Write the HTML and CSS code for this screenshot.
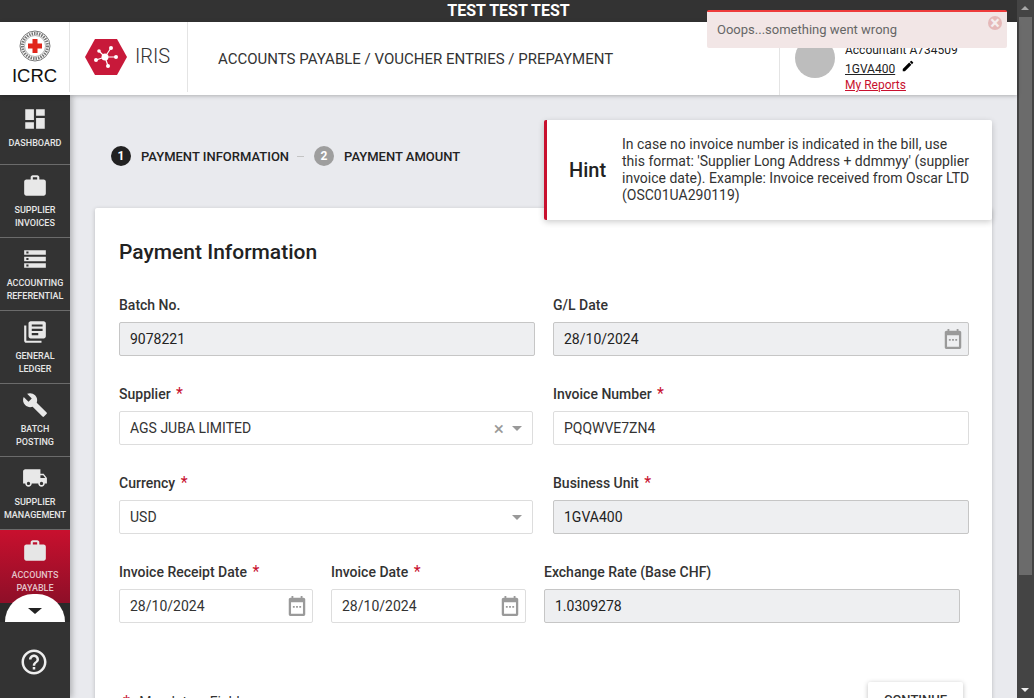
FILE: index.html
```html
<!DOCTYPE html>
<html lang="en">
<head>
    <meta charset="UTF-8">
    <title>IRIS - Prepayment</title>
    <link rel="stylesheet" href="styles.css">
</head>
<body>
    <svg class="defs" width="0" height="0">
        <symbol id="i-case" viewBox="0 0 24 24"><path d="M20 6h-4V4c0-1.110-.89-2-2-2h-4c-1.110 0-2 .89-2 2v2H4c-1.110 0-1.990.89-1.990 2L2 19c0 1.110.89 2 2 2h16c1.110 0 2-.89 2-2V8c0-1.110-.89-2-2-2zm-6 0h-4V4h4v2z"/></symbol>
        <symbol id="i-cal" viewBox="0 0 24 24"><path d="M19 3h-1V1h-2v2H8V1H6v2H5C3.900 3 3 3.900 3 5v16c0 1.100.9 2 2 2h14c1.100 0 2-.9 2-2V5c0-1.100-.9-2-2-2zm-.5 17.500h-13V8h13v12.500zM7.500 12h2v2h-2zm3.500 0h2v2h-2zm3.500 0h2v2h-2z"/></symbol>
    </svg>

    <div class="page">
        <div class="app">
            <div class="topbar">TEST TEST TEST</div>

            <header class="header">
                <div class="logo-icrc">
                    <svg class="emblem" width="32" height="32" viewBox="0 0 32 32">
                        <circle cx="16" cy="16" r="15" fill="#fff" stroke="#777" stroke-width="1"/>
                        <circle cx="16" cy="16" r="12.500" fill="none" stroke="#777" stroke-width="3" stroke-dasharray="1.500 1"/>
                        <circle cx="16" cy="16" r="10.500" fill="#fff" stroke="#888" stroke-width="0.600"/>
                        <path d="M13.500 9h5v4.500H23v5h-4.500V23h-5v-4.500H9v-5h4.500z" fill="#e1251b"/>
                    </svg>
                    <span>ICRC</span>
                </div>
                <div class="logo-iris">
                    <svg width="42" height="36" viewBox="0 0 42 36">
                        <path d="M0 18L10 0h22l10 18-10 18H10z" fill="#c8193a"/>
                        <g stroke="#fff" stroke-width="1.200">
                            <path d="M20 18l-9 3M20 18h11M20 18l3 9M20 18l-6-6M20 18l6-9"/>
                        </g>
                        <g fill="#fff">
                            <circle cx="20" cy="18" r="3.500"/>
                            <circle cx="11" cy="21" r="2"/>
                            <circle cx="31" cy="18" r="2"/>
                            <circle cx="23" cy="27" r="2"/>
                            <circle cx="14" cy="12" r="1.800"/>
                            <circle cx="26" cy="9" r="2"/>
                        </g>
                    </svg>
                    <span>IRIS</span>
                </div>
                <div class="breadcrumb">ACCOUNTS PAYABLE / VOUCHER ENTRIES / PREPAYMENT</div>
                <div class="user">
                    <div class="avatar"></div>
                    <div class="user-info">
                        <div>Accountant A734509</div>
                        <div class="user-unit">
                            <a href="#">1GVA400</a>
                            <svg width="14" height="14" viewBox="0 0 24 24"><path d="M3 17.250V21h3.750L17.810 9.940l-3.750-3.750L3 17.250zM20.710 7.040a1 1 0 0 0 0-1.410l-2.340-2.340a1 1 0 0 0-1.410 0l-1.830 1.830 3.750 3.750 1.830-1.830z"/></svg>
                        </div>
                        <a class="reports" href="#">My Reports</a>
                    </div>
                </div>
            </header>

            <div class="layout">
                <nav class="sidebar">
                    <a class="nav-item nav-first" href="#">
                        <svg viewBox="0 0 24 24"><path d="M3 13h8V3H3v10zm0 8h8v-6H3v6zm10 0h8V11h-8v10zm0-18v6h8V3h-8z"/></svg>
                        <span>DASHBOARD</span>
                    </a>
                    <a class="nav-item" href="#">
                        <svg><use href="#i-case"/></svg>
                        <span>SUPPLIER<br>INVOICES</span>
                    </a>
                    <a class="nav-item" href="#">
                        <svg viewBox="0 0 24 24"><path d="M2 20h20v-4H2v4zm2-3h2v2H4v-2zM2 4v4h20V4H2zm4 3H4V5h2v2zm-4 7h20v-4H2v4zm2-3h2v2H4v-2z"/></svg>
                        <span>ACCOUNTING<br>REFERENTIAL</span>
                    </a>
                    <a class="nav-item" href="#">
                        <svg viewBox="0 0 24 24"><path d="M4 6H2v14c0 1.100.9 2 2 2h14v-2H4V6zm16-4H8c-1.100 0-2 .9-2 2v12c0 1.100.9 2 2 2h12c1.100 0 2-.9 2-2V4c0-1.100-.9-2-2-2zm-1 9H9V9h10v2zm-4 4H9v-2h6v2zm4-8H9V5h10v2z"/></svg>
                        <span>GENERAL<br>LEDGER</span>
                    </a>
                    <a class="nav-item" href="#">
                        <svg viewBox="0 0 24 24"><path d="M22.700 19l-9.100-9.100c.9-2.300.4-5-1.500-6.900-2-2-5-2.400-7.400-1.300L9 6 6 9 1.600 4.700C.4 7.100.9 10.100 2.900 12.100c1.900 1.900 4.600 2.400 6.900 1.500l9.100 9.100c.4.4 1 .4 1.400 0l2.300-2.300c.5-.4.5-1.100.1-1.400z"/></svg>
                        <span>BATCH<br>POSTING</span>
                    </a>
                    <a class="nav-item" href="#">
                        <svg viewBox="0 0 24 24"><path d="M20 8h-3V4H3c-1.100 0-2 .9-2 2v11h2c0 1.660 1.340 3 3 3s3-1.340 3-3h6c0 1.660 1.340 3 3 3s3-1.340 3-3h2v-5l-3-4zM6 18.500c-.83 0-1.500-.67-1.500-1.500s.67-1.500 1.500-1.500 1.500.67 1.500 1.500-.67 1.500-1.500 1.500zm13.500-9l1.960 2.500H17V9.500h2.500zm-1.500 9c-.83 0-1.500-.67-1.500-1.500s.67-1.500 1.500-1.500 1.500.67 1.500 1.500-.67 1.500-1.500 1.500z"/></svg>
                        <span>SUPPLIER<br>MANAGEMENT</span>
                    </a>
                    <a class="nav-item nav-active" href="#">
                        <svg><use href="#i-case"/></svg>
                        <span>ACCOUNTS<br>PAYABLE</span>
                    </a>
                    <div class="nav-more"><i></i></div>
                    <a class="nav-help" href="#">
                        <svg viewBox="0 0 24 24"><path d="M11 18h2v-2h-2v2zm1-16C6.480 2 2 6.480 2 12s4.480 10 10 10 10-4.480 10-10S17.520 2 12 2zm0 18c-4.410 0-8-3.590-8-8s3.590-8 8-8 8 3.590 8 8-3.590 8-8 8zm0-14c-2.210 0-4 1.790-4 4h2c0-1.100.9-2 2-2s2 .9 2 2c0 2-3 1.750-3 5h2c0-2.250 3-2.500 3-5 0-2.210-1.790-4-4-4z"/></svg>
                    </a>
                </nav>

                <main class="content">
                    <div class="stepper">
                        <span class="step-num">1</span>
                        <span class="step-label">PAYMENT INFORMATION</span>
                        <span class="step-line"></span>
                        <span class="step-num step-todo">2</span>
                        <span class="step-label">PAYMENT AMOUNT</span>
                    </div>

                    <div class="hint">
                        <div class="hint-title">Hint</div>
                        <p>In case no invoice number is indicated in the bill, use this format: 'Supplier Long Address + ddmmyy' (supplier invoice date). Example: Invoice received from Oscar LTD (OSC01UA290119)</p>
                    </div>

                    <section class="card">
                        <h2>Payment Information</h2>

                        <div class="row">
                            <div class="field">
                                <label>Batch No.</label>
                                <div class="input disabled">9078221</div>
                            </div>
                            <div class="field">
                                <label>G/L Date</label>
                                <div class="input disabled">28/10/2024
                                    <svg class="cal"><use href="#i-cal"/></svg>
                                </div>
                            </div>
                        </div>

                        <div class="row">
                            <div class="field select-field">
                                <label>Supplier <b>*</b></label>
                                <div class="input">AGS JUBA LIMITED
                                    <span class="clear">&times;</span>
                                    <i class="caret"></i>
                                </div>
                            </div>
                            <div class="field">
                                <label>Invoice Number <b>*</b></label>
                                <div class="input">PQQWVE7ZN4</div>
                            </div>
                        </div>

                        <div class="row">
                            <div class="field select-field">
                                <label>Currency <b>*</b></label>
                                <div class="input">USD
                                    <i class="caret"></i>
                                </div>
                            </div>
                            <div class="field">
                                <label>Business Unit <b>*</b></label>
                                <div class="input disabled">1GVA400</div>
                            </div>
                        </div>

                        <div class="row row-dates">
                            <div class="field">
                                <label>Invoice Receipt Date <b>*</b></label>
                                <div class="input">28/10/2024
                                    <svg class="cal"><use href="#i-cal"/></svg>
                                </div>
                            </div>
                            <div class="field">
                                <label>Invoice Date <b>*</b></label>
                                <div class="input">28/10/2024
                                    <svg class="cal"><use href="#i-cal"/></svg>
                                </div>
                            </div>
                            <div class="field">
                                <label>Exchange Rate (Base CHF)</label>
                                <div class="input disabled">1.0309278</div>
                            </div>
                        </div>

                        <div class="card-foot">
                            <div class="mandatory"><b>*</b> Mandatory Fields</div>
                            <button>CONTINUE</button>
                        </div>
                    </section>
                </main>
            </div>
        </div>

        <div class="scrollbar">
            <i class="arrow-up"></i>
            <div class="thumb"></div>
            <i class="arrow-down"></i>
        </div>

        <div class="toast">
            Ooops...something went wrong
            <span class="toast-close">&times;</span>
        </div>
    </div>
</body>
</html>
```

FILE: styles.css
```css
* {
    box-sizing: border-box;
}

html, body {
    margin: 0;
    height: 100%;
    overflow: hidden;
}

body {
    font-family: Roboto, "Liberation Sans", sans-serif;
    font-size: 14px;
    color: #333;
    background-color: #e9eaee;
}

a {
    color: inherit;
}

.defs {
    position: absolute;
}

.page {
    display: flex;
    height: 698px;
    position: relative;
}

.app {
    flex: 1;
    min-width: 0;
    display: flex;
    flex-direction: column;
}

.topbar {
    height: 22px;
    flex: none;
    background-color: #333;
    color: #fff;
    font-size: 16px;
    font-weight: 700;
    line-height: 22px;
    text-align: center;
}

/* header */
.header {
    height: 73px;
    flex: none;
    display: flex;
    background-color: #fff;
    box-shadow: 0 1px 4px rgba(0, 0, 0, 0.25);
    position: relative;
    z-index: 2;
}

.logo-icrc {
    width: 70px;
    height: 70px;
    border-right: 1px solid #e4e4e4;
    display: flex;
    flex-direction: column;
    align-items: center;
    padding-top: 8px;
}

.logo-icrc span {
    font-family: "Liberation Sans", sans-serif;
    font-size: 18.500px;
    line-height: 21px;
    color: #111;
    margin-top: 3px;
}

.logo-iris {
    width: 118px;
    height: 70px;
    border-right: 1px solid #e4e4e4;
    display: flex;
    align-items: flex-start;
    gap: 8px;
    padding: 17px 0 0 15px;
}

.logo-iris span {
    font-size: 20px;
    font-weight: 300;
    line-height: 34px;
    color: #333;
}

.breadcrumb {
    flex: 1;
    padding-left: 30px;
    font-size: 15px;
    line-height: 74px;
    color: #333;
}

.user {
    width: 238px;
    border-left: 1px solid #e4e4e4;
    display: flex;
    gap: 10px;
    padding: 16px 0 0 15px;
}

.avatar {
    width: 40px;
    height: 40px;
    border-radius: 50%;
    background-color: #bdbdbd;
}

.user-info {
    font-size: 12px;
    line-height: 16px;
    margin-top: 4px;
    color: #222;
}

.user-unit {
    display: flex;
    align-items: center;
    gap: 6px;
    margin-top: 3px;
}

.user-unit svg {
    margin-top: -6px;
}

.reports {
    color: #c8102e;
    display: block;
}

/* sidebar */
.layout {
    flex: 1;
    display: flex;
    min-height: 0;
}

.sidebar {
    width: 70px;
    flex: none;
    background-color: #333;
    box-shadow: 2px 0 6px rgba(0, 0, 0, 0.25);
    position: relative;
    z-index: 1;
}

.nav-item {
    height: 73px;
    display: flex;
    flex-direction: column;
    align-items: center;
    gap: 5px;
    padding-top: 8px;
    border-bottom: 1px solid #6b6b6b;
    color: #e6e6e6;
    text-decoration: none;
    font-size: 9px;
    font-weight: 500;
    line-height: 13px;
    text-align: center;
}

.nav-item svg {
    width: 26px;
    height: 26px;
    flex: none;
    fill: #e8e8e8;
}

.nav-first {
    height: 70px;
    padding-top: 11px;
}

.nav-active {
    background: linear-gradient(#c8102e, #8e0f28);
    border-bottom: 0;
    color: #e3c2c8;
}

.nav-active svg {
    fill: #e6e6e6;
}

.nav-more {
    height: 19px;
    background-color: #2a2a2a;
}

.nav-more::before {
    content: "";
    position: absolute;
    left: 5px;
    top: 499px;
    width: 60px;
    height: 28px;
    background-color: #fff;
    border-radius: 30px 30px 0 0;
}

.nav-more i {
    position: absolute;
    left: 28px;
    top: 513px;
    border: 7px solid transparent;
    border-top: 6px solid #222;
    border-bottom: 0;
}

.nav-help {
    display: block;
    width: 30px;
    height: 30px;
    margin: 25px 0 0 19px;
}

.nav-help svg {
    width: 30px;
    height: 30px;
    fill: #eee;
}

/* content */
.content {
    flex: 1;
    min-width: 0;
    padding: 0 25px;
    position: relative;
    overflow: hidden;
    background-color: #e9eaee;
}

.stepper {
    height: 113px;
    display: flex;
    align-items: center;
    padding: 9px 0 0 16px;
}

.step-num {
    width: 20px;
    height: 20px;
    border-radius: 50%;
    background-color: #222;
    color: #fff;
    font-size: 12px;
    font-weight: 700;
    line-height: 20px;
    text-align: center;
}

.step-todo {
    background-color: #9e9e9e;
}

.step-label {
    margin-left: 10px;
    font-size: 13px;
    font-weight: 500;
    color: #222;
}

.step-line {
    width: 7px;
    height: 1px;
    background-color: #c4c4c4;
    margin: 0 10px 0 8px;
}

.hint {
    position: absolute;
    left: 474px;
    top: 25px;
    width: 448px;
    height: 100px;
    background-color: #fff;
    border-left: 3px solid #c8102e;
    border-radius: 2px;
    box-shadow: 0 2px 6px rgba(0, 0, 0, 0.2);
    display: flex;
    align-items: center;
    z-index: 1;
}

.hint-title {
    width: 75px;
    flex: none;
    padding-left: 22px;
    font-size: 20px;
    font-weight: 500;
    color: #222;
}

.hint p {
    margin: 0;
    width: 348px;
    font-size: 14px;
    line-height: 17px;
    color: #333;
}

.card {
    background-color: #fff;
    border-radius: 2px;
    box-shadow: 0 1px 4px rgba(0, 0, 0, 0.2);
    padding: 30px 23px 40px 24px;
}

.card h2 {
    margin: 0 0 30px;
    font-size: 21px;
    font-weight: 500;
    line-height: 28px;
    color: #222;
}

.row {
    display: grid;
    grid-template-columns: 416px 416px;
    gap: 18px;
    margin-bottom: 29px;
}

.row-dates {
    grid-template-columns: 194px 195px 416px;
}

.field label {
    display: block;
    height: 26px;
    padding-top: 1px;
    font-size: 14px;
    font-weight: 500;
    line-height: 16px;
    color: #333;
}

.field label b {
    color: #c8102e;
    font-size: 16px;
    font-weight: 400;
    margin-left: 2px;
}

.input {
    height: 34px;
    display: flex;
    align-items: center;
    padding: 0 10px;
    border: 1px solid #ddd;
    border-radius: 2px;
    background-color: #fff;
    font-size: 14px;
    color: #333;
}

.disabled {
    background-color: #eeeff1;
    border-color: #c6c6c6;
    color: #222;
}

.select-field .input {
    width: 414px;
}

.cal {
    width: 22px;
    height: 22px;
    margin-left: auto;
    margin-right: -6px;
    fill: #9a9a9a;
}

.clear {
    margin-left: auto;
    font-size: 19px;
    color: #999;
}

.caret {
    margin-left: auto;
    border: 5px solid transparent;
    border-top: 5px solid #999;
    border-bottom: 0;
}

.clear + .caret {
    margin-left: 8px;
}

.card-foot {
    display: flex;
    justify-content: space-between;
    align-items: flex-start;
    margin-top: 59px;
    padding-right: 6px;
}

.mandatory {
    margin-top: 10px;
    font-size: 14px;
    color: #333;
}

.mandatory b {
    color: #c8102e;
    font-size: 16px;
    font-weight: 400;
    margin: 0 6px 0 4px;
}

.card-foot button {
    width: 95px;
    height: 34px;
    border: 0;
    border-radius: 2px;
    background-color: #fff;
    box-shadow: 0 1px 5px rgba(0, 0, 0, 0.25);
    font-family: inherit;
    font-size: 13px;
    font-weight: 500;
    color: #333;
}

/* scrollbar and toast */
.scrollbar {
    width: 17px;
    flex: none;
    background-color: #444;
    position: relative;
}

.thumb {
    position: absolute;
    left: 2px;
    right: 2px;
    top: 17px;
    height: 558px;
    background-color: #6b6b6b;
}

.arrow-up,
.arrow-down {
    position: absolute;
    left: 4px;
    border: 4px solid transparent;
}

.arrow-up {
    top: 6px;
    border-top: 0;
    border-bottom: 4px solid #a8a8a8;
}

.arrow-down {
    bottom: 6px;
    border-bottom: 0;
    border-top: 4px solid #eee;
}

.toast {
    position: absolute;
    left: 707px;
    top: 10px;
    width: 300px;
    height: 38px;
    padding: 2px 0 0 10px;
    background-color: #f2e6e6;
    border-top: 2px solid #ee3b3b;
    border-radius: 2px;
    color: #666;
    font-size: 13px;
    line-height: 32px;
    z-index: 5;
}

.toast-close {
    position: absolute;
    right: 5px;
    top: 4px;
    width: 14px;
    height: 14px;
    border-radius: 50%;
    background-color: #e5b9b9;
    color: #f5eeee;
    font-size: 18px;
    font-weight: 700;
    line-height: 14px;
    text-align: center;
}
```
